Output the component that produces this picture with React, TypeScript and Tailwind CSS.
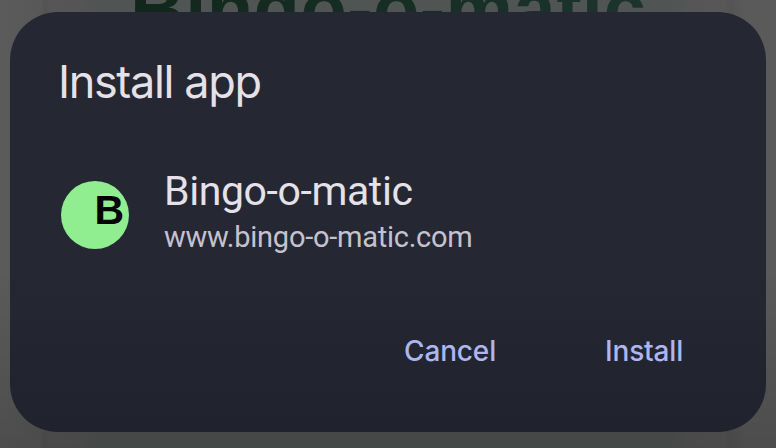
export default function App() {
  return (
    <div className="relative h-[448px] w-[776px] overflow-hidden bg-[linear-gradient(90deg,#5b5b5b_0px,#585858_40px,#535353_46px,#565656_50px,#555_80px,#505452_98px,#505452_670px,#565656_692px,#575757_725px,#545454_730px,#5a5a5a_745px)] px-[10px] pt-3">
      <div className="absolute -top-[35px] left-[130px] whitespace-nowrap bg-[linear-gradient(90deg,#12271b,#1c342d)] bg-clip-text font-['Liberation_Sans',sans-serif] text-[76px] leading-[88px] font-bold tracking-[0.4px] text-transparent">
        Bingo-o-matic
      </div>
      <div className="absolute inset-0 bg-linear-to-b from-transparent from-60% to-black/15" />
      <main className="relative flex h-[420px] w-[756px] flex-col rounded-[48px] bg-linear-to-b from-[#252733] from-60% to-[#20222d] pl-[50px] font-[Roboto,sans-serif]">
        <h1 className="-ml-[2px] mt-[40px] h-[60px] font-[Inter,sans-serif] text-[45px] leading-[60px] tracking-[-1.35px] text-[#e4e1e9]">
          <span className="whitespace-nowrap">Install app</span>
        </h1>
        <section className="mt-[56px] flex h-[92px] items-start">
          <div className="mt-[13px] ml-px flex h-[68px] w-[68px] shrink-0 justify-end overflow-hidden rounded-full bg-[#90ee90] pr-[5px] font-['Liberation_Sans',sans-serif] text-[41px] leading-[58px] font-bold text-black">
            B
          </div>
          <div className="ml-[35px]">
            <h2 className="h-[46px] text-[41px] leading-[46px] tracking-[-0.4px] whitespace-nowrap text-[#e4e1e9]">Bingo-o-matic</h2>
            <p className="mt-[6px] text-[29px] leading-[34px] tracking-[-0.25px] whitespace-nowrap text-[#c5c2d0]">www.bingo-o-matic.com</p>
          </div>
        </section>
        <div className="mt-[71px] ml-[344px] flex font-[Inter,sans-serif] text-[28px] leading-[40px] tracking-[-0.15px] font-medium text-[#adb6ef]">
          <button className="w-[201px] text-left">Cancel</button>
          <button className="text-left">Install</button>
        </div>
      </main>
    </div>
  );
}
